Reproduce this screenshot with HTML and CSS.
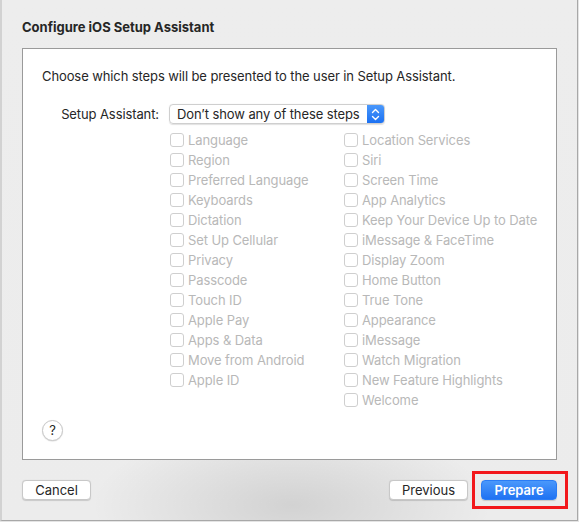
FILE: index.html
```html
<!DOCTYPE html>
<html>
<head>
<meta charset="utf-8">
<link rel="stylesheet" href="styles.css">
</head>
<body>
<div class="window">
  <h1 class="title">Configure iOS Setup Assistant</h1>
  <div class="panel">
    <p class="intro">Choose which steps will be presented to the user in Setup Assistant.</p>
    <div class="setup-row">
      <span class="setup-label">Setup Assistant:</span>
      <div class="popup">
        <span class="popup-text">Don’t show any of these steps</span>
        <span class="popup-arrows">
          <svg width="9" height="13" viewBox="0 0 9 13"><path d="M1.5 4.5 L4.5 1.5 L7.5 4.5 M1.5 8.5 L4.5 11.5 L7.5 8.5" fill="none" stroke="#fff" stroke-width="1.4" stroke-linecap="round" stroke-linejoin="round"/></svg>
        </span>
      </div>
    </div>
    <div class="steps">
      <ul class="col col-left">
        <li><span class="box"></span>Language</li>
        <li><span class="box"></span>Region</li>
        <li><span class="box"></span>Preferred Language</li>
        <li><span class="box"></span>Keyboards</li>
        <li><span class="box"></span>Dictation</li>
        <li><span class="box"></span>Set Up Cellular</li>
        <li><span class="box"></span>Privacy</li>
        <li><span class="box"></span>Passcode</li>
        <li><span class="box"></span>Touch ID</li>
        <li><span class="box"></span>Apple Pay</li>
        <li><span class="box"></span>Apps &amp; Data</li>
        <li><span class="box"></span>Move from Android</li>
        <li><span class="box"></span>Apple ID</li>
      </ul>
      <ul class="col col-right">
        <li><span class="box"></span>Location Services</li>
        <li><span class="box"></span>Siri</li>
        <li><span class="box"></span>Screen Time</li>
        <li><span class="box"></span>App Analytics</li>
        <li><span class="box"></span>Keep Your Device Up to Date</li>
        <li><span class="box"></span>iMessage &amp; FaceTime</li>
        <li><span class="box"></span>Display Zoom</li>
        <li><span class="box"></span>Home Button</li>
        <li><span class="box"></span>True Tone</li>
        <li><span class="box"></span>Appearance</li>
        <li><span class="box"></span>iMessage</li>
        <li><span class="box"></span>Watch Migration</li>
        <li><span class="box"></span>New Feature Highlights</li>
        <li><span class="box"></span>Welcome</li>
      </ul>
    </div>
    <button class="help">?</button>
  </div>
  <div class="footer">
    <button class="btn">Cancel</button>
    <div class="right-buttons">
      <button class="btn btn-previous">Previous</button>
      <div class="highlight-wrap">
        <button class="btn btn-primary">Prepare</button>
        <span class="highlight"></span>
      </div>
    </div>
  </div>
</div>
</body>
</html>
```
FILE: styles.css
```css
* { box-sizing: border-box; }
html, body { margin: 0; padding: 0; }
body {
  width: 579px;
  height: 522px;
  overflow: hidden;
  background: #e4e4e4;
  font-family: "Inter", "Liberation Sans", sans-serif;
  font-size: 13px;
  letter-spacing: -0.1px;
  color: #262626;
}
.window {
  width: 578px;
  height: 521px;
  border-left: 2px solid #d2d2d2;
  border-right: 1px solid #a8a8a8;
  border-bottom: 1px solid #a8a8a8;
  background:
    radial-gradient(ellipse 200px 80px at 290px 505px, rgba(0,0,0,0.11), rgba(0,0,0,0) 100%),
    linear-gradient(#ededed, #ececec);
  padding: 0 0 0 20px;
  position: relative;
}
.title {
  margin: 0;
  padding-top: 18px;
  height: 48px;
  font-size: 13px;
  font-weight: 700;
  line-height: 18px;
  letter-spacing: 0;
  color: #262626;
}
.panel {
  width: 535px;
  height: 412px;
  background: #fff;
  border: 1px solid #9a9a9a;
  padding: 19px 0 0 19px;
  display: flex;
  flex-direction: column;
}
.intro {
  margin: 0;
  line-height: 16px;
  height: 16px;
}
.setup-row {
  margin-top: 20px;
  display: flex;
  align-items: center;
  height: 20px;
}
.setup-label {
  width: 118px;
  text-align: right;
  padding-right: 1px;
}
.popup {
  margin-left: 9px;
  width: 216px;
  height: 20px;
  display: flex;
  align-items: stretch;
  border: 1px solid #cfcfcf;
  border-radius: 4px;
  box-shadow: 0 0.5px 1px rgba(0,0,0,0.12);
  overflow: hidden;
}
.popup-text {
  flex: 1;
  padding-left: 7px;
  line-height: 18px;
  color: #262626;
}
.popup-arrows {
  width: 17px;
  background: linear-gradient(#4a98fb, #1c71f2);
  display: flex;
  align-items: center;
  justify-content: center;
}
.steps {
  margin-top: 6px;
  display: flex;
  padding-left: 128px;
}
.col {
  list-style: none;
  margin: 0;
  padding: 0;
}
.col-left { width: 174px; }
.col li {
  display: flex;
  align-items: center;
  height: 20px;
  color: #b8b8b8;
  white-space: nowrap;
}
.box {
  width: 14px;
  height: 14px;
  border: 1px solid #cfcfcf;
  border-radius: 3px;
  background: #fff;
  margin-right: 4px;
  flex: none;
}
.help {
  margin-top: 10px;
  width: 21px;
  height: 21px;
  border-radius: 50%;
  border: 1px solid #c8c8c8;
  background: #fff;
  box-shadow: 0 0.5px 1px rgba(0,0,0,0.15);
  font-family: inherit;
  font-size: 13px;
  color: #262626;
  padding: 0;
  line-height: 19px;
  text-align: center;
}
.footer {
  margin-top: 20px;
  width: 535px;
  display: flex;
  justify-content: space-between;
  align-items: center;
}
.right-buttons {
  display: flex;
  gap: 13px;
  align-items: center;
}
.btn {
  height: 20px;
  border: 1px solid #c8c8c8;
  border-radius: 4px;
  background: #fff;
  box-shadow: 0 0.5px 1px rgba(0,0,0,0.15);
  font-family: inherit;
  font-size: 13px;
  color: #262626;
  padding: 0;
  line-height: 18px;
  width: 69px;
}
.btn-previous { width: 79px; }
.btn-primary {
  width: 76px;
  border: 1px solid #2a7cf5;
  background: linear-gradient(#4a98fb, #1f72f2);
  color: #fff;
  font-weight: 600;
}
.highlight-wrap {
  position: relative;
  display: flex;
}
.highlight {
  position: absolute;
  left: -9px;
  top: -9px;
  width: 96px;
  height: 38px;
  border: 3px solid #f2181c;
  pointer-events: none;
}
```
